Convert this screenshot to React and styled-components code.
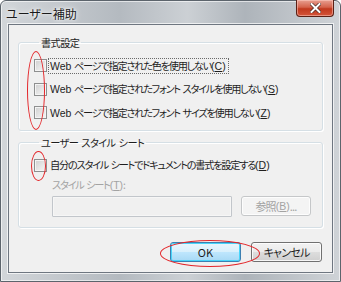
import React from 'react';
import styled, { createGlobalStyle } from 'styled-components';

const GlobalStyle = createGlobalStyle`
  html, body {
    margin: 0;
    padding: 0;
    background: #ffffff;
  }
  body {
    font-family: "Noto Sans CJK JP", "Liberation Sans", sans-serif;
    font-size: 12px;
    color: #1e1e1e;
  }
`;

const Window = styled.div`
  position: relative;
  box-sizing: border-box;
  width: 341px;
  height: 282px;
  display: flex;
  flex-direction: column;
  padding: 0 7px 8px 7px;
  border: 1px solid #5c646c;
  border-radius: 6px 6px 0 0;
  background:
    linear-gradient(90deg, rgba(255,255,255,0.25), rgba(120,130,140,0.2) 35%, rgba(255,255,255,0.15) 55%, rgba(110,120,130,0.25) 72%, rgba(255,255,255,0.2)),
    #c3c8cd;
  box-shadow: inset 0 0 0 1px rgba(255, 255, 255, 0.6);
  font-feature-settings: "palt";
`;

const TitleBar = styled.div`
  height: 23px;
  display: flex;
  align-items: flex-start;
  justify-content: space-between;
`;

const Title = styled.span`
  margin-top: 5px;
  margin-left: -2px;
  font-size: 12px;
  line-height: 15px;
  color: #1a1a1a;
  text-shadow: 0 0 6px #ffffff, 0 0 3px #ffffff;
`;

const CloseButton = styled.div`
  width: 38px;
  height: 17px;
  margin-top: -1px;
  margin-right: -1px;
  display: flex;
  align-items: center;
  justify-content: center;
  box-sizing: border-box;
  border: 1px solid #5b2015;
  border-top: none;
  border-radius: 0 0 4px 4px;
  background: linear-gradient(180deg, #e8a091 0%, #d4634c 45%, #c1391e 55%, #d4553a 100%);
  box-shadow: inset 0 0 0 1px rgba(255, 210, 200, 0.5);
`;

const Client = styled.div`
  flex: 1;
  min-width: 0;
  display: flex;
  flex-direction: column;
  padding: 10px 9px 0 9px;
  background: #f0f0f0;
  border: 1px solid #6e7680;
  box-shadow: 0 0 0 1px rgba(255, 255, 255, 0.7);
  font-size: 10.2px;
  letter-spacing: -1.25px;
  word-spacing: 1.5px;
`;

const Latin = styled.span`
  letter-spacing: 0;
  word-spacing: 0;
  font-family: "Liberation Sans", sans-serif;
  font-size: 10.5px;
`;

const Group = styled.fieldset`
  min-width: 0;
  margin: ${p => p.$top}px 0 0 0;
  padding: 0 0 ${p => p.$bottom}px 15px;
  border: 1px solid #d5dfe5;
  border-radius: 3px;
  box-shadow: inset 1px 1px 0 #ffffff, 1px 1px 0 #ffffff;
  display: flex;
  flex-direction: column;
`;

const Legend = styled.legend`
  margin-left: 5px;
  padding: 0 2px;
  line-height: 15px;
  color: #1e1e1e;
  letter-spacing: -0.6px;
`;

const Rows = styled.div`
  display: flex;
  flex-direction: column;
  padding-top: 4px;
`;

const Row = styled.div`
  height: 23.5px;
  display: flex;
  align-items: center;
  gap: 1px;
`;

const Box = styled.span`
  box-sizing: border-box;
  width: 13px;
  height: 13px;
  flex: none;
  border: 1px solid #8e8f8f;
  background: linear-gradient(135deg, #cfcfcf 0%, #e6e6e6 55%, #f6f6f6 100%);
  box-shadow: inset 0 0 0 1px #f4f4f4;
`;

const Label = styled.span`
  padding: 0 2px 0 1px;
  line-height: 13px;
  border: 1px ${p => (p.$focused ? 'dotted #6a6a6a' : 'solid transparent')};
  white-space: nowrap;
  color: #1e1e1e;
`;

const SheetBlock = styled.div`
  display: flex;
  flex-direction: column;
  padding-left: 18px;
  padding-right: 11px;
`;

const SheetLabel = styled.div`
  height: 15px;
  line-height: 15px;
  color: #a3a3a3;
`;

const SheetInputs = styled.div`
  margin-top: 4px;
  display: flex;
  align-items: flex-start;
  justify-content: space-between;
`;

const TextBox = styled.div`
  box-sizing: border-box;
  width: 180px;
  height: 21px;
  border: 1px solid #c2c6cb;
  border-radius: 1px;
  background: #f0f0f0;
  box-shadow: inset 0 0 0 1px #f6f6f6;
`;

const Button = styled.div`
  box-sizing: border-box;
  width: ${p => p.$w}px;
  height: ${p => p.$h}px;
  display: flex;
  align-items: center;
  justify-content: center;
  border-radius: 3px;
  line-height: 14px;
  font-size: 11px;
  letter-spacing: ${p => (p.$default ? '0' : '-0.8px')};
  border: 1px solid ${p => (p.$disabled ? '#c5c7c9' : p.$default ? '#3c7fb1' : '#707070')};
  color: ${p => (p.$disabled ? '#a3a3a3' : '#1e1e1e')};
  background: ${p =>
    p.$disabled
      ? '#f4f4f4'
      : p.$default
      ? 'linear-gradient(180deg, #eaf6fd 0%, #d9f0fc 48%, #bee6fd 52%, #a7d9f5 100%)'
      : 'linear-gradient(180deg, #f2f2f2 0%, #ebebeb 48%, #dddddd 52%, #cfcfcf 100%)'};
  box-shadow: inset 0 0 0 1px ${p => (p.$default ? '#48d5fa' : 'rgba(255,255,255,0.8)')};
`;

const ButtonRow = styled.div`
  margin-top: 14px;
  display: flex;
  justify-content: flex-end;
  gap: 10px;
  padding-right: 1px;
`;

const Annotation = styled.span`
  position: absolute;
  box-sizing: border-box;
  left: ${p => p.$x}px;
  top: ${p => p.$y}px;
  width: ${p => p.$w}px;
  height: ${p => p.$h}px;
  border: 1px solid #e3262a;
  border-radius: 50%;
  pointer-events: none;
`;

const Key = ({ k }) => (
  <Latin>
    (<u>{k}</u>)
  </Latin>
);

const Check = ({ children, focused }) => (
  <Row>
    <Box />
    <Label $focused={focused}>{children}</Label>
  </Row>
);

export default function App() {
  return (
    <>
      <GlobalStyle />
      <Window>
        <TitleBar>
          <Title>ユーザー補助</Title>
          <CloseButton>
            <svg width="11" height="10" viewBox="0 0 11 10">
              <path d="M1.5 1 L9.5 9 M9.5 1 L1.5 9" stroke="#4a2a24" strokeWidth="3.4" strokeLinecap="square" />
              <path d="M1.5 1 L9.5 9 M9.5 1 L1.5 9" stroke="#ffffff" strokeWidth="2" strokeLinecap="square" />
            </svg>
          </CloseButton>
        </TitleBar>
        <Client>
          <Group $top={0} $bottom={5}>
            <Legend>書式設定</Legend>
            <Rows>
              <Check focused><Latin>Web</Latin> ページで指定された色を使用しない<Key k="C" /></Check>
              <Check><Latin>Web</Latin> ページで指定されたフォント スタイルを使用しない<Key k="S" /></Check>
              <Check><Latin>Web</Latin> ページで指定されたフォント サイズを使用しない<Key k="Z" /></Check>
            </Rows>
          </Group>
          <Group $top={4} $bottom={10}>
            <Legend>ユーザー スタイル シート</Legend>
            <Rows>
              <Check>自分のスタイル シートでドキュメントの書式を設定する<Key k="D" /></Check>
            </Rows>
            <SheetBlock>
              <SheetLabel>スタイル シート<Key k="T" />:</SheetLabel>
              <SheetInputs>
                <TextBox />
                <Button $w={70} $h={20} $disabled>参照<Key k="B" />...</Button>
              </SheetInputs>
            </SheetBlock>
          </Group>
          <ButtonRow>
            <Button $w={71} $h={20} $default>OK</Button>
            <Button $w={71} $h={20}>キャンセル</Button>
          </ButtonRow>
        </Client>
        <Annotation $x={26} $y={50} $w={18} $h={79} />
        <Annotation $x={30} $y={150} $w={15} $h={30} />
        <Annotation $x={159} $y={239} $w={100} $h={27} />
      </Window>
    </>
  );
}
